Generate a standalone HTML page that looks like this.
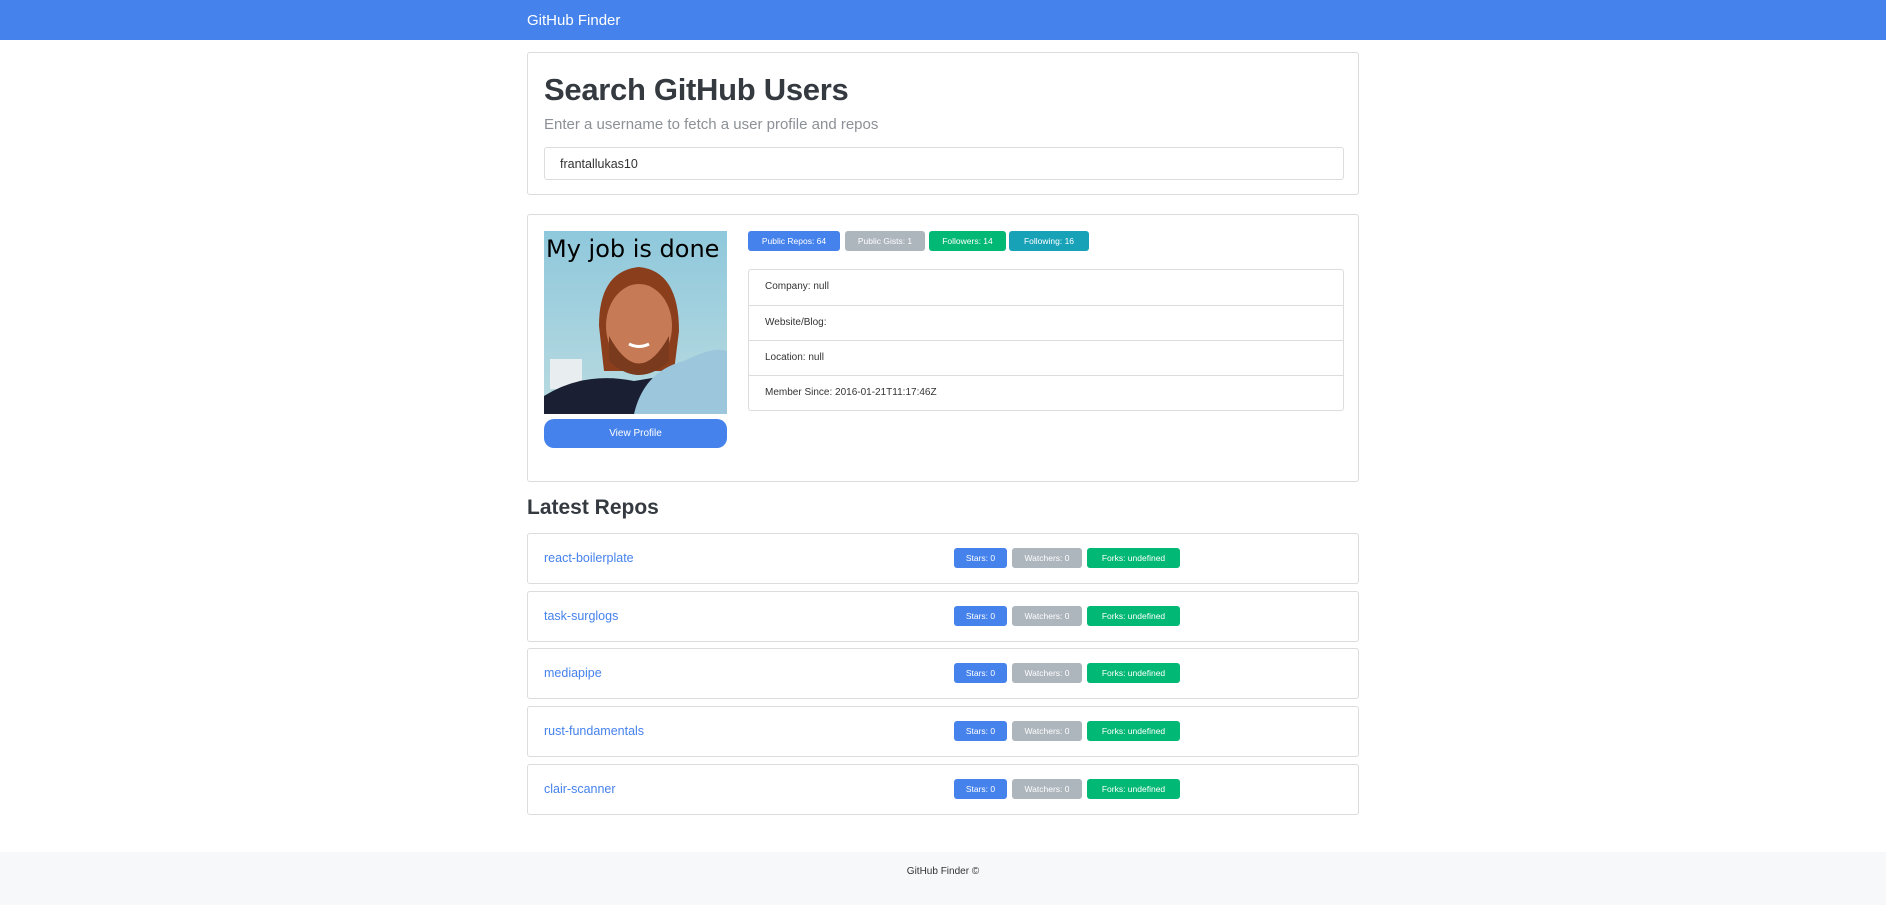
<!DOCTYPE html>
<html><head><meta charset="utf-8"><style>
*{box-sizing:border-box;margin:0;padding:0}
body{width:1886px;height:905px;font-family:"Liberation Sans",sans-serif;color:#212529;background:#fff;position:relative;overflow:hidden}
.nav{position:absolute;left:0;top:0;width:1886px;height:40px;background:#4582ec}
.nav span{position:absolute;left:527px;top:12px;color:#fff;font-size:15px}
.card{position:absolute;left:527px;width:832px;border:1px solid #dcdcdc;border-radius:3px;background:#fff}
h1{position:absolute;left:16px;top:19px;font-size:31px;font-weight:bold;color:#343a40;letter-spacing:-0.3px}
.lead{position:absolute;left:16px;top:63px;font-size:15px;font-weight:300;color:#8b9196}
.input{position:absolute;left:16px;top:94px;width:800px;height:33px;border:1px solid #dcdcdc;border-radius:3px;font-size:12.5px;padding:9px 15px;color:#333}
.badge{position:absolute;height:20px;border-radius:3px;color:#fff;font-size:8.5px;text-align:center;line-height:20px}
.lg{position:absolute;left:220px;top:54px;width:596px;border:1px solid #dcdcdc;border-radius:3px}
.lg div{height:35px;border-top:1px solid #dcdcdc;font-size:10px;padding:11px 16px;color:#333}
.lg div:first-child{border-top:0}
.btn{position:absolute;left:16px;top:204px;width:183px;height:29px;background:#4582ec;border-radius:10px;color:#fff;font-size:10px;text-align:center;line-height:29px}
h3{position:absolute;left:527px;top:496px;font-size:21px;font-weight:bold;color:#343a40}
.repo{height:51px}
.repo a{position:absolute;left:16px;top:17px;color:#4582ec;font-size:12.5px;text-decoration:none}
.rb{top:14px}
.foot{position:absolute;left:0;top:852px;width:1886px;height:53px;background:#f7f8fa;text-align:center;font-size:10px;line-height:40px;color:#333}
</style></head><body>
<div class="nav"><span>GitHub Finder</span></div>
<div class="card" style="top:52px;height:143px">
<h1>Search GitHub Users</h1>
<div class="lead">Enter a username to fetch a user profile and repos</div>
<div class="input">frantallukas10</div>
</div>
<div class="card" style="top:214px;height:268px">
<svg style="position:absolute;left:16px;top:16px" width="183" height="183" viewBox="0 0 183 183">
<defs><linearGradient id="sky" x1="0" y1="0" x2="0" y2="1"><stop offset="0" stop-color="#8fc8dc"/><stop offset="1" stop-color="#b9dbe0"/></linearGradient></defs>
<rect width="183" height="183" fill="url(#sky)"/>
<rect x="6" y="128" width="32" height="30" fill="#e8eef0"/>
<path d="M55 95 Q55 40 95 36 Q135 40 135 100 L130 140 L60 140 Z" fill="#8a3e1c"/>
<ellipse cx="95" cy="95" rx="33" ry="42" fill="#c67a55"/>
<path d="M65 105 Q95 160 125 105 L125 130 Q95 158 65 130Z" fill="#7a3a1e"/>
<path d="M85 113 Q95 118 105 113" stroke="#fff" stroke-width="3" fill="none"/>
<path d="M0 183 L0 165 Q40 140 90 150 L150 140 L183 150 L183 183Z" fill="#1a1f33"/>
<path d="M90 183 Q100 140 140 130 Q170 115 183 120 L183 183Z" fill="#9cc6dc"/>
<text x="2" y="26" font-family="DejaVu Sans,sans-serif" font-size="24" fill="#000">My job is done</text>
</svg>
<div class="btn">View Profile</div>
<div class="badge" style="left:220px;top:16px;width:92px;background:#4582ec">Public Repos: 64</div>
<div class="badge" style="left:317px;top:16px;width:80px;background:#adb5bd">Public Gists: 1</div>
<div class="badge" style="left:401px;top:16px;width:77px;background:#02b875">Followers: 14</div>
<div class="badge" style="left:481px;top:16px;width:80px;background:#17a2b8">Following: 16</div>
<div class="lg"><div>Company: null</div><div>Website/Blog:</div><div>Location: null</div><div>Member Since: 2016-01-21T11:17:46Z</div></div>
</div>
<h3>Latest Repos</h3>
<div class="card repo" style="top:533px"><a>react-boilerplate</a><div class="badge rb" style="left:426px;width:53px;background:#4582ec">Stars: 0</div><div class="badge rb" style="left:484px;width:70px;background:#adb5bd">Watchers: 0</div><div class="badge rb" style="left:559px;width:93px;background:#02b875">Forks: undefined</div></div>
<div class="card repo" style="top:591px"><a>task-surglogs</a><div class="badge rb" style="left:426px;width:53px;background:#4582ec">Stars: 0</div><div class="badge rb" style="left:484px;width:70px;background:#adb5bd">Watchers: 0</div><div class="badge rb" style="left:559px;width:93px;background:#02b875">Forks: undefined</div></div>
<div class="card repo" style="top:648px"><a>mediapipe</a><div class="badge rb" style="left:426px;width:53px;background:#4582ec">Stars: 0</div><div class="badge rb" style="left:484px;width:70px;background:#adb5bd">Watchers: 0</div><div class="badge rb" style="left:559px;width:93px;background:#02b875">Forks: undefined</div></div>
<div class="card repo" style="top:706px"><a>rust-fundamentals</a><div class="badge rb" style="left:426px;width:53px;background:#4582ec">Stars: 0</div><div class="badge rb" style="left:484px;width:70px;background:#adb5bd">Watchers: 0</div><div class="badge rb" style="left:559px;width:93px;background:#02b875">Forks: undefined</div></div>
<div class="card repo" style="top:764px"><a>clair-scanner</a><div class="badge rb" style="left:426px;width:53px;background:#4582ec">Stars: 0</div><div class="badge rb" style="left:484px;width:70px;background:#adb5bd">Watchers: 0</div><div class="badge rb" style="left:559px;width:93px;background:#02b875">Forks: undefined</div></div>
<div class="foot">GitHub Finder ©</div>
</body></html>
